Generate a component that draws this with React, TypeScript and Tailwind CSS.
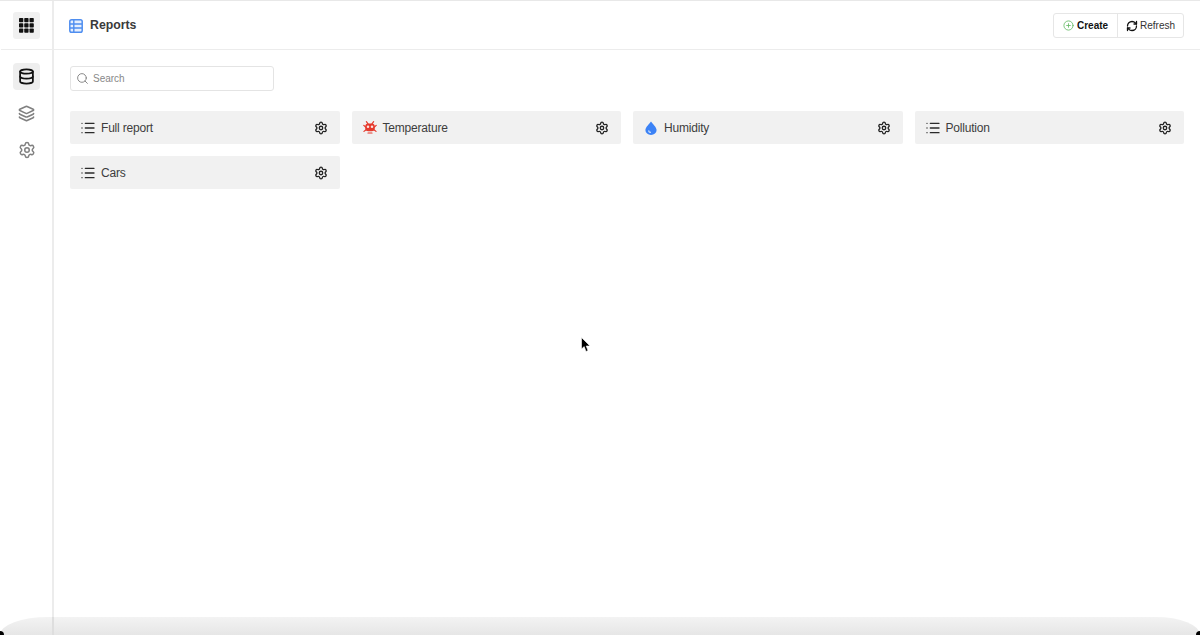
import { CirclePlus, Database, Layers, List, RefreshCw, Search, Settings } from "lucide-react";

const font = { fontFamily: '"Liberation Sans", Arial, sans-serif' };

function Grid() {
  return (
    <svg width="15" height="15" viewBox="0 0 15 15" fill="#111">
      {[0, 5.25, 10.5].flatMap((y) =>
        [0, 5.25, 10.5].map((x) => <rect key={`${x}-${y}`} x={x} y={y} width="4.3" height="4.3" rx="0.8" />)
      )}
    </svg>
  );
}

function TableIcon() {
  return (
    <svg width="14" height="14" viewBox="0 0 14 14" fill="none">
      <rect x="0.8" y="0.8" width="12.4" height="12.4" rx="1.8" fill="#e6effd" stroke="#4f8ef0" strokeWidth="1.5" />
      <path d="M1 5H13M1 9H13M4.8 1V13" stroke="#4f8ef0" strokeWidth="1.4" />
    </svg>
  );
}

function Bug() {
  return (
    <svg width="14" height="13" viewBox="0 0 14 13" fill="none" stroke="#e5392c" strokeLinecap="round">
      <path d="M3.4 0.7 5 2.8M10.6 0.7 9 2.8" strokeWidth="1.2" />
      <path d="M0.8 4.4 2.6 6M13.2 4.4 11.4 6M1 10.4 3 8.8M13 10.4 11 8.8" strokeWidth="1.2" />
      <rect x="2.2" y="2.6" width="9.6" height="7.6" rx="3.2" fill="#e5392c" stroke="none" />
      <circle cx="5" cy="5.8" r="1.25" fill="#fbe3e1" stroke="none" />
      <circle cx="9" cy="5.8" r="1.25" fill="#fbe3e1" stroke="none" />
      <path d="M5 12H9" strokeWidth="1.2" />
    </svg>
  );
}

function Drop() {
  return (
    <svg width="12" height="14" viewBox="0 0 12 14">
      <path d="M6 0.4C7.2 2.6 11.6 5.8 11.6 9A5.6 5 0 0 1 0.4 9C0.4 5.8 4.8 2.6 6 0.4Z" fill="#3b82f6" />
      <path d="M3 9.4A3 2.8 0 0 0 6 12V10.8A2 1.8 0 0 1 4.2 9.2Z" fill="#bfd7fb" />
    </svg>
  );
}

function Cursor() {
  return (
    <svg width="10" height="16" viewBox="0 0 10 16" className="absolute left-[581px] top-[336px]">
      <path d="M0.5 0.5V12L3.2 9.6 5 14.5 7 13.6 5.2 9H9Z" fill="#000" stroke="#fff" strokeWidth="0.6" />
    </svg>
  );
}

function Card({ icon, label }: { icon: React.ReactNode; label: string }) {
  return (
    <div className="flex h-[33px] items-center rounded-[2px] bg-[#f1f1f1] pl-[11px] pr-[12px]">
      <span className="flex w-[14px] justify-center">{icon}</span>
      <span className="ml-[6px] text-[12px] tracking-[-0.2px] text-[#3d3d3d]">{label}</span>
      <Settings size={14} strokeWidth={2.2} className="ml-auto text-[#222]" />
    </div>
  );
}

const listIcon = <List size={16} strokeWidth={2} className="shrink-0 text-[#2a2a2a]" />;

export default function App() {
  return (
    <div className="relative flex h-[635px] w-[1200px] overflow-hidden border-t border-[#e8e8e8] bg-white" style={font}>
      <aside className="flex w-[54px] shrink-0 flex-col items-center border-r-2 border-[#ececec] pl-[1px]">
        <div className="flex h-[49px] w-full items-center justify-center border-b border-[#ececec]">
          <div className="flex h-[27px] w-[27px] items-center justify-center rounded-[3px] bg-[#f0f0f0]">
            <Grid />
          </div>
        </div>
        <div className="mt-[13px] flex h-[27px] w-[27px] items-center justify-center rounded-[4px] bg-[#eeeeee]">
          <Database size={17} strokeWidth={2.5} className="text-[#111]" />
        </div>
        <Layers size={17} strokeWidth={2.3} className="mt-[15px] text-[#808080]" />
        <Settings size={18} strokeWidth={2} className="mt-[19px] text-[#808080]" />
      </aside>
      <main className="flex min-w-0 flex-1 flex-col">
        <header className="flex h-[49px] shrink-0 items-center border-b border-[#ececec] pl-[15px] pr-[16px] pt-[1px]">
          <TableIcon />
          <h1 className="ml-[7px] text-[12.3px] font-bold text-[#3a3a3a]">Reports</h1>
          <div className="ml-auto flex h-[25px] rounded-[3px] border border-[#e6e6e6] text-[10px]">
            <button className="flex w-[64px] items-center gap-[3px] border-r border-[#e6e6e6] pl-[9px] font-bold text-[#111]">
              <CirclePlus size={11} strokeWidth={1.8} className="text-[#62b862]" />
              Create
            </button>
            <button className="flex w-[65px] items-center gap-[2px] pl-[8px] text-[#333]">
              <RefreshCw size={12} strokeWidth={2.6} className="text-[#111]" />
              Refresh
            </button>
          </div>
        </header>
        <div className="flex-1 pl-[16px] pr-[16px] pt-[16px]">
          <div className="flex h-[25px] w-[204px] items-center gap-[4px] rounded-[3px] border border-[#e4e4e4] pl-[5px]">
            <Search size={13} strokeWidth={1.6} className="text-[#777]" />
            <span className="text-[10px] text-[#888]">Search</span>
          </div>
          <div className="mt-[20px] grid grid-cols-4 gap-[12px]">
            <Card icon={listIcon} label="Full report" />
            <Card icon={<Bug />} label="Temperature" />
            <Card icon={<Drop />} label="Humidity" />
            <Card icon={listIcon} label="Pollution" />
            <Card icon={listIcon} label="Cars" />
          </div>
        </div>
      </main>
      <Cursor />
      <div className="absolute bottom-0 left-0 h-[18px] w-full rounded-tl-[48px_18px] rounded-tr-[44px_18px] bg-gradient-to-b from-[#f3f3f3] to-[#e6e6e6]" />
      <div className="absolute bottom-0 left-[52px] h-[18px] w-[2px] bg-[#dedede]" />
      <div className="absolute bottom-0 left-0 h-[4px] w-[4px] rounded-tr-[4px] bg-black" />
      <div className="absolute bottom-0 right-0 h-[4px] w-[4px] rounded-tl-[4px] bg-black" />
    </div>
  );
}
